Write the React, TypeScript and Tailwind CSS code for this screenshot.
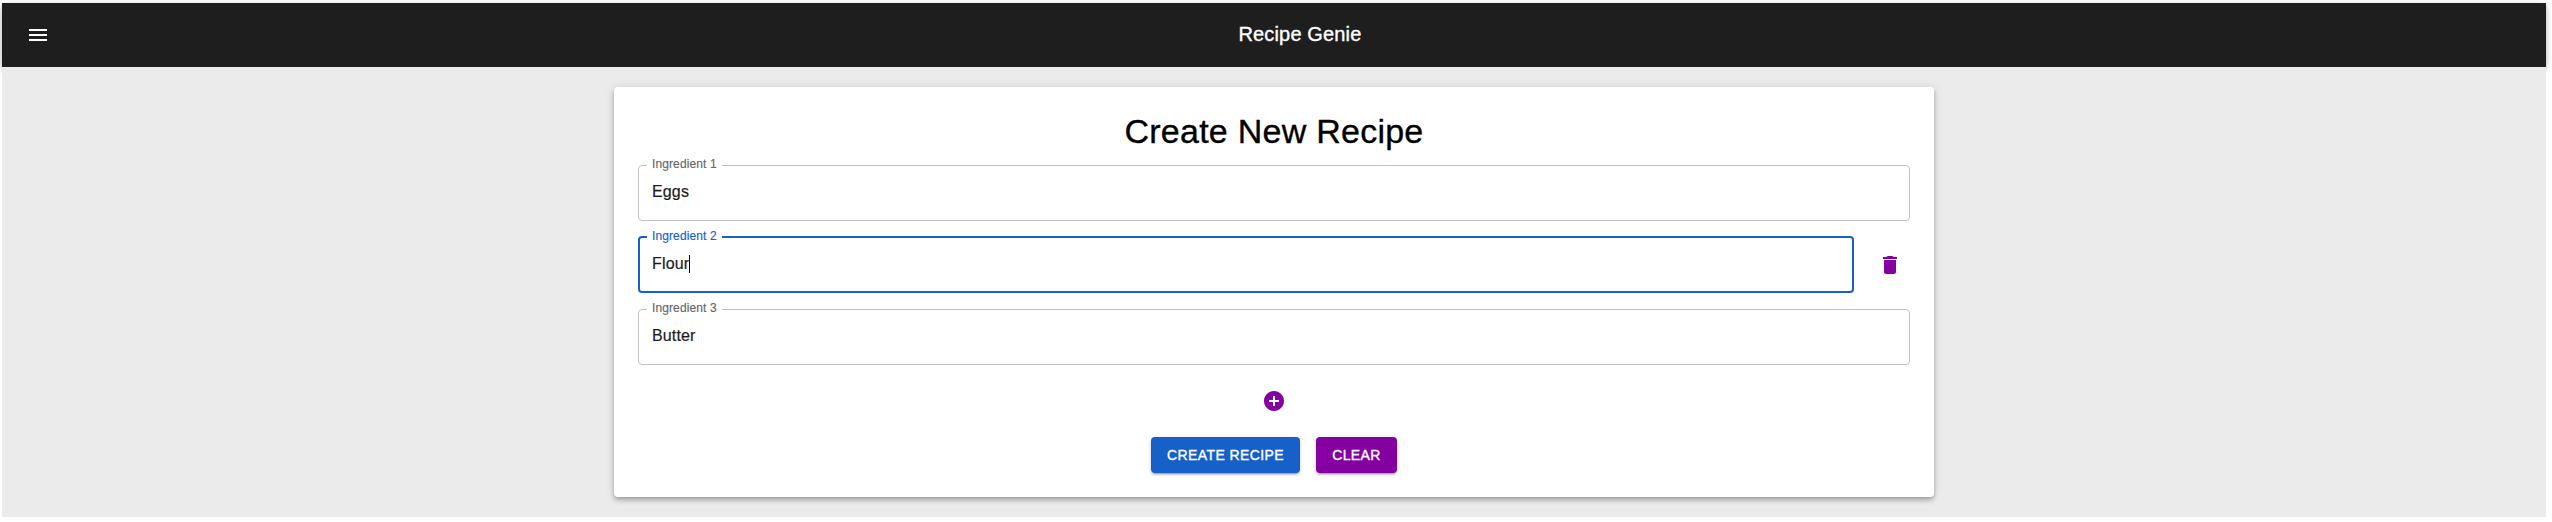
import React from "react";

type FieldProps = { label: string; value: string; focused?: boolean };

function Field({ label, value, focused = false }: FieldProps) {
  return (
    <fieldset
      className={
        "-mt-[9px] h-[65px] min-w-0 grow rounded-[4px] " +
        (focused ? "border-2 border-[#1760c7] pl-[7px]" : "border border-[#c2c2c2] pl-2")
      }
    >
      <legend
        className={
          "h-[18px] w-[75px] pl-[5px] text-[12px] leading-[16px] tracking-[0.11px] whitespace-nowrap [-webkit-text-stroke:0.15px_currentColor] " +
          (focused ? "text-[#1760c7]" : "text-[#666666]")
        }
      >
        {label}
      </legend>
      <div className="flex items-center pt-[6px] pl-[5px]">
        <span className="text-[16px] leading-[23px] tracking-[0.15px] text-[#1c1c1c] [-webkit-text-stroke:0.2px_currentColor]">
          {value}
        </span>
        {focused && <span className="h-[18px] w-px bg-black" />}
      </div>
    </fieldset>
  );
}

const buttonClass =
  "flex h-9 items-center justify-center rounded-[4px] text-[14px] font-medium tracking-[0.4px] text-white [-webkit-text-stroke:0.35px_currentColor] shadow-[0_3px_1px_-2px_rgba(0,0,0,0.2),0_2px_2px_0_rgba(0,0,0,0.14),0_1px_5px_0_rgba(0,0,0,0.12)]";

export default function App() {
  return (
    <div className="h-[522px] w-[2552px] overflow-hidden bg-white pt-[3px] pl-[2px] font-['Liberation_Sans',Arial,sans-serif]">
      <header className="flex h-16 w-[2544px] items-center bg-[#1e1e1e] px-6 text-white shadow-[0_2px_4px_-1px_rgba(0,0,0,0.2),0_4px_5px_0_rgba(0,0,0,0.14),0_1px_10px_0_rgba(0,0,0,0.12)]">
        <button aria-label="Menu" className="mr-4 -ml-3 size-12 p-3">
          <svg viewBox="0 0 24 24" className="size-6 fill-current">
            <path d="M3 18h18v-2H3v2zm0-5h18v-2H3v2zm0-7v2h18V6H3z" />
          </svg>
        </button>
        <h1 className="grow pb-[2px] text-center text-[20px] leading-8 font-medium tracking-[0.15px] [-webkit-text-stroke:0.35px_currentColor]">
          Recipe Genie
        </h1>
      </header>
      <main className="relative flex h-[450px] w-[2544px] justify-center bg-[#ebebeb] pt-5">
        <section className="flex h-[410px] w-[1320px] flex-col rounded-[4px] bg-white px-6 pt-6 shadow-[0_2px_4px_-1px_rgba(0,0,0,0.2),0_4px_5px_0_rgba(0,0,0,0.14),0_1px_10px_0_rgba(0,0,0,0.12)]">
          <h2 className="h-[54px] text-center text-[34px] leading-[40px] tracking-[0.25px] text-black [-webkit-text-stroke:0.35px_currentColor]">
            Create New Recipe
          </h2>
          <div className="flex flex-col gap-4">
            <div className="flex h-14">
              <Field label="Ingredient 1" value="Eggs" />
            </div>
            <div className="flex h-14">
              <Field label="Ingredient 2" value="Flour" focused />
              <button aria-label="Delete ingredient" className="mt-2 ml-4 size-10 p-2 text-[#8500a0]">
                <svg viewBox="0 0 24 24" className="size-6 fill-current">
                  <path d="M6 19c0 1.1.9 2 2 2h8c1.1 0 2-.9 2-2V7H6v12zM19 4h-3.500l-1-1h-5l-1 1H5v2h14V4z" />
                </svg>
              </button>
            </div>
            <div className="flex h-14">
              <Field label="Ingredient 3" value="Butter" />
            </div>
          </div>
          <button aria-label="Add ingredient" className="mt-4 size-10 self-center p-2 text-[#8500a0]">
            <svg viewBox="0 0 24 24" className="size-6 fill-current">
              <path d="M12 2C6.480 2 2 6.480 2 12s4.480 10 10 10 10-4.480 10-10S17.520 2 12 2zm5 11h-4v4h-2v-4H7v-2h4V7h2v4h4v2z" />
            </svg>
          </button>
          <div className="mt-4 flex justify-center gap-4">
            <button className={buttonClass + " w-[149px] bg-[#1760c7]"}>CREATE RECIPE</button>
            <button className={buttonClass + " w-[81px] bg-[#8500a0]"}>CLEAR</button>
          </div>
        </section>
      </main>
    </div>
  );
}
